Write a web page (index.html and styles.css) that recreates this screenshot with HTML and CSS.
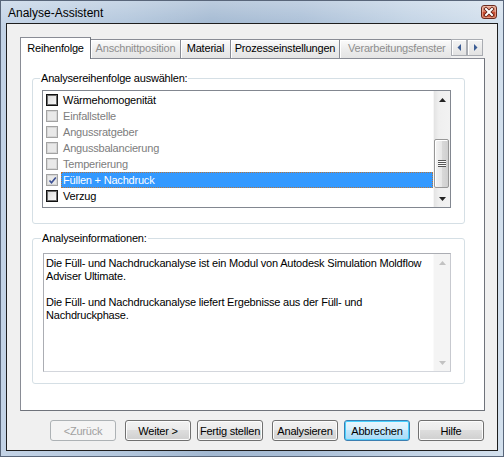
FILE: index.html
```html
<!DOCTYPE html>
<html lang="de">
<head>
<meta charset="utf-8">
<title>Analyse-Assistent</title>
<link rel="stylesheet" href="styles.css">
</head>
<body>
<div class="window">
  <div class="titlebar">
    <span class="title">Analyse-Assistent</span>
    <span class="close" title="Schließen">
      <svg width="14" height="12" viewBox="0 0 14 12"><path d="M4 3 L10 9 M10 3 L4 9" stroke="#5a1a10" stroke-width="3.6" stroke-linecap="square"/><path d="M4 3 L10 9 M10 3 L4 9" stroke="#fff" stroke-width="2" stroke-linecap="square"/></svg>
    </span>
  </div>
  <div class="client">
    <div class="tabctl">
      <div class="tabstrip">
        <div class="tab sel w-reihe">Reihenfolge</div>
        <div class="tab dis w-ansch">Anschnittposition</div>
        <div class="tab w-mat">Material</div>
        <div class="tab w-proz">Prozesseinstellungen</div>
        <div class="tab dis w-verarb">Verarbeitungsfenster</div>
        <div class="tabscroll">
          <span class="tsbtn"><svg width="5" height="7" viewBox="0 0 5 7"><path d="M4 0 L4 7 L0.5 3.5 Z" fill="#3c5d94"/></svg></span>
          <span class="tsbtn"><svg width="5" height="7" viewBox="0 0 5 7"><path d="M1 0 L1 7 L4.5 3.5 Z" fill="#3c5d94"/></svg></span>
        </div>
      </div>
      <div class="panel">
        <fieldset class="group g1">
          <legend>Analysereihenfolge auswählen:</legend>
          <div class="listbox">
            <ul class="items">
              <li class="item"><span class="cb"></span><span class="lbl">Wärmehomogenität</span></li>
              <li class="item off"><span class="cb"></span><span class="lbl">Einfallstelle</span></li>
              <li class="item off"><span class="cb"></span><span class="lbl">Angussratgeber</span></li>
              <li class="item off"><span class="cb"></span><span class="lbl">Angussbalancierung</span></li>
              <li class="item off"><span class="cb"></span><span class="lbl">Temperierung</span></li>
              <li class="item off selected"><span class="cb"><svg width="9" height="9" viewBox="0 0 9 9"><path d="M1.5 4.5 L3.5 6.8 L7.8 1.5" fill="none" stroke="#3b4f93" stroke-width="1.6"/></svg></span><span class="lbl">Füllen + Nachdruck</span></li>
              <li class="item"><span class="cb"></span><span class="lbl">Verzug</span></li>
            </ul>
            <div class="vscroll">
              <div class="sarrow"><svg width="7" height="4" viewBox="0 0 7 4"><path d="M0 4 L3.5 0 L7 4 Z" fill="#222"/></svg></div>
              <div class="strack"><div class="thumb"><span class="grip"></span></div></div>
              <div class="sarrow"><svg width="7" height="4" viewBox="0 0 7 4"><path d="M0 0 L7 0 L3.5 4 Z" fill="#222"/></svg></div>
            </div>
          </div>
        </fieldset>
        <fieldset class="group g2">
          <legend>Analyseinformationen:</legend>
          <div class="textbox">
            <div class="text">
              <p>Die Füll- und Nachdruckanalyse ist ein Modul von Autodesk Simulation Moldflow<br>Adviser Ultimate.</p>
              <p>Die Füll- und Nachdruckanalyse liefert Ergebnisse aus der Füll- und<br>Nachdruckphase.</p>
            </div>
            <div class="vscroll disabled">
              <div class="sarrow"><svg width="7" height="4" viewBox="0 0 7 4"><path d="M0 4 L3.5 0 L7 4 Z" fill="#c2c2c2"/></svg></div>
              <div class="strack"></div>
              <div class="sarrow"><svg width="7" height="4" viewBox="0 0 7 4"><path d="M0 0 L7 0 L3.5 4 Z" fill="#c2c2c2"/></svg></div>
            </div>
          </div>
        </fieldset>
      </div>
    </div>
    <div class="buttons">
      <button class="btn" disabled>&lt;Zurück</button>
      <button class="btn gap9">Weiter &gt;</button>
      <button class="btn gap6">Fertig stellen</button>
      <button class="btn gap9">Analysieren</button>
      <button class="btn gap6 default">Abbrechen</button>
      <button class="btn gap8">Hilfe</button>
    </div>
  </div>
</div>
</body>
</html>
```

FILE: styles.css
```css
* { box-sizing: border-box; }
html, body { margin: 0; padding: 0; }
body {
  width: 504px;
  height: 457px;
  overflow: hidden;
  font-family: "Liberation Sans", Arial, sans-serif;
  font-size: 11px;
  letter-spacing: -0.2px;
  color: #000;
  background: #fff;
}

.window {
  width: 504px;
  height: 457px;
  display: flex;
  flex-direction: column;
  padding: 0 5px 5px;
  border: 1px solid #59667a;
  background:
    linear-gradient(rgba(255,255,255,0.28), rgba(255,255,255,0) 26px),
    linear-gradient(90deg, #c3d3e6 0%, #b2c6dc 25%, #a2b8d1 42%, #aabfd7 60%, #c2d3e5 82%, #d3e0ed 100%);
}

.titlebar {
  height: 22px;
  display: flex;
  align-items: flex-start;
  justify-content: space-between;
}
.title {
  padding: 5px 0 0 2px;
  font-size: 12px;
  line-height: 14px;
  letter-spacing: 0;
  color: #000;
}
.close {
  margin: 4px 1px 0 0;
  width: 16px;
  height: 14px;
  border: 1px solid #6b2b20;
  border-radius: 3px;
  background: linear-gradient(#e9a896 0%, #d9826a 45%, #c7462c 55%, #d06345 100%);
  box-shadow: inset 0 0 0 1px rgba(255,220,200,0.45);
  display: flex;
  align-items: center;
  justify-content: center;
}

.client {
  flex: 1;
  border: 1px solid #1e1e1e;
  background: #f0f0f0;
  padding: 13px 0 0 13px;
}

/* tabs */
.tabctl { width: 465px; }
.tabstrip {
  height: 21px;
  display: flex;
  align-items: flex-end;
}
.tab {
  height: 19px;
  padding-top: 2px;
  line-height: 13px;
  text-align: center;
  white-space: nowrap;
  border: 1px solid #898c95;
  border-bottom: none;
  border-right-color: #6f737b;
  background: linear-gradient(#fbfbfb, #ececec 55%, #e4e4e4);
  box-shadow: inset 1px 1px 0 #fff;
  margin-left: -1px;
}
.tab.dis { color: #8e8e8e; }
.tab.sel {
  height: 22px;
  padding-top: 4px;
  background: #fff;
  box-shadow: none;
  margin-left: 0;
  margin-bottom: -1px;
  position: relative;
  z-index: 1;
}
.w-reihe { width: 71px; }
.w-ansch { width: 91px; }
.w-mat { width: 51px; }
.w-proz { width: 110px; }
.w-verarb {
  width: 112px;
  text-align: left;
  padding-left: 8px;
  overflow: hidden;
  border-right: none;
}
.tabscroll {
  display: flex;
  align-self: flex-start;
  margin-top: 2px;
}
.tsbtn {
  width: 16px;
  height: 17px;
  border: 1px solid #a9acb2;
  background: linear-gradient(#f4f4f4, #e2e2e2);
  box-shadow: inset 1px 1px 0 #fff;
  display: flex;
  align-items: center;
  justify-content: center;
}

.panel {
  height: 353px;
  border: 1px solid #898c95;
  border-right-color: #6f737b;
  border-bottom-color: #6f737b;
  background: #fff;
  padding: 0 0 0 11px;
}

/* group boxes */
.group {
  margin: 0;
  width: 433px;
  border: 1px solid #d5dfe5;
  border-radius: 3px;
  min-width: 0;
}
.group legend {
  padding: 0 1px;
  margin-left: -2px;
  line-height: 13px;
  color: #000;
}
.g1 {
  margin-top: 13px;
  padding: 5px 13px 15px 9px;
}
.g2 {
  margin-top: 8px;
  padding: 8px 13px 11px 10px;
}

/* listbox */
.listbox {
  height: 118px;
  border: 1px solid #828790;
  display: flex;
  background: #fff;
}
.items {
  list-style: none;
  margin: 0;
  padding: 1px 0 0;
  flex: 1;
}
.item {
  height: 16px;
  display: flex;
  align-items: center;
}
.cb {
  width: 12px;
  height: 12px;
  margin: 0 3px 0 3px;
  border: 1px solid #111;
  box-shadow: inset 0 0 0 1px #6c6c6c;
  background: linear-gradient(135deg, #d8d8d8, #fafafa);
  display: flex;
  align-items: center;
  justify-content: center;
  flex: none;
}
.item.off .cb {
  border-color: #a3a3a3;
  box-shadow: inset 0 0 0 1px #d6d6d6;
  background: #e9e9e9;
}
.lbl {
  flex: 1;
  height: 16px;
  line-height: 16px;
  padding-left: 2px;
  white-space: nowrap;
}
.item.off .lbl { color: #7d7d7d; }
.item.selected .lbl {
  background: #3399ff;
  color: #fff;
  outline: 1px dotted #b4753e;
  outline-offset: -1px;
}

.vscroll {
  width: 17px;
  display: flex;
  flex-direction: column;
  background: linear-gradient(90deg, #e3e3e3, #efefef 30%, #f2f2f2);
  border-left: 1px solid #f6f6f6;
}
.sarrow {
  height: 17px;
  display: flex;
  align-items: center;
  justify-content: center;
}
.strack {
  flex: 1;
  padding: 31px 1px 0 0;
}
.thumb {
  height: 49px;
  border: 1px solid #979797;
  border-radius: 2px;
  background: linear-gradient(90deg, #f5f5f5, #e7e7e7 50%, #d9d9d9 51%, #cfcfcf);
  box-shadow: inset 1px 1px 0 #fff;
  display: flex;
  align-items: center;
  justify-content: center;
}
.grip {
  width: 8px;
  height: 7px;
  background: repeating-linear-gradient(#555 0 1px, #fafafa 1px 2px);
}

/* text box */
.textbox {
  height: 119px;
  border: 1px solid #abadb3;
  border-right-color: #c7c9cf;
  border-bottom-color: #d3d6dc;
  display: flex;
  background: #fff;
}
.text {
  flex: 1;
  padding: 3px 0 0 2px;
  line-height: 13px;
  white-space: nowrap;
}
.text p { margin: 0 0 13px; }
.vscroll.disabled {
  background: #f4f4f4;
  border-left: 1px solid #fafafa;
}

/* buttons */
.buttons {
  display: flex;
  margin-top: 9px;
  padding-left: 30px;
}
.btn {
  width: 66px;
  height: 21px;
  padding: 0;
  font-family: "Liberation Sans", Arial, sans-serif;
  font-size: 11px;
  letter-spacing: -0.2px;
  color: #000;
  border: 1px solid #707070;
  border-radius: 3px;
  background: linear-gradient(#f2f2f2 0%, #ebebeb 45%, #dddddd 50%, #cfcfcf 100%);
  box-shadow: inset 0 0 0 1px #fcfcfc;
}
.btn:disabled {
  color: #a0a0a0;
  border-color: #adb2b5;
  background: #f4f4f4;
  box-shadow: none;
}
.btn.default {
  border-color: #3c7fb1;
  box-shadow: inset 0 0 0 1px #48d1ff;
  background: linear-gradient(#eaf6fd 0%, #d9f0fc 45%, #bee6fd 50%, #a7d9f5 100%);
}
.gap9 { margin-left: 9px; }
.gap6 { margin-left: 6px; }
.gap8 { margin-left: 8px; }
```
